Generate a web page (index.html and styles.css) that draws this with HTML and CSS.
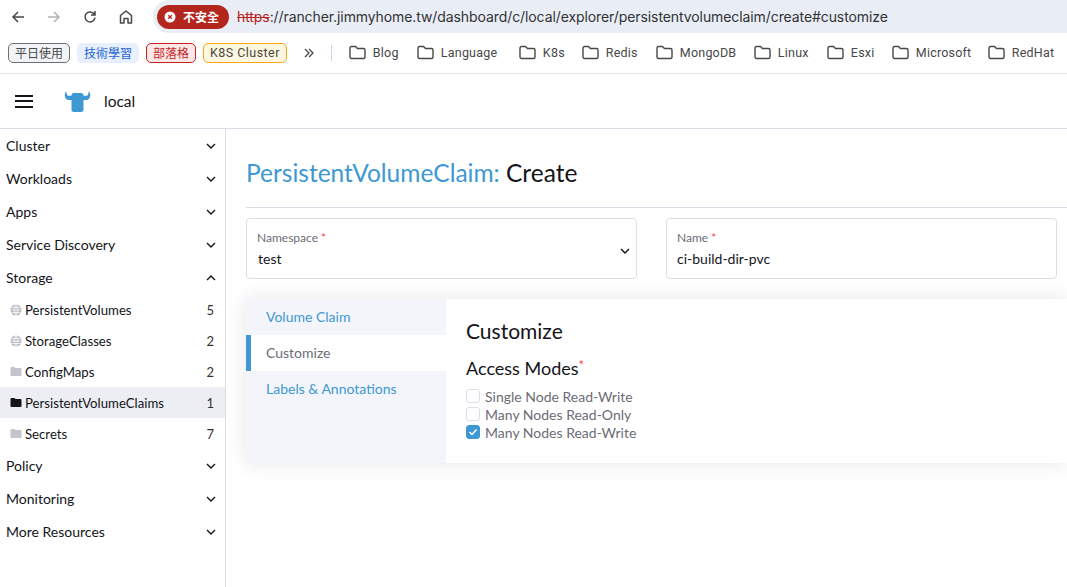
FILE: index.html
```html
<!DOCTYPE html>
<html lang="zh-Hant">
<head>
    <meta charset="UTF-8">
    <title>PersistentVolumeClaim: Create</title>
    <link rel="stylesheet" href="styles.css">
</head>
<body>
    <svg class="sprites" width="0" height="0">
        <symbol id="folder" viewBox="0 0 17 15"><path d="M1 3a1.5 1.5 0 0 1 1.5-1.5h4l2 2h6A1.5 1.5 0 0 1 16 5v7a1.5 1.5 0 0 1-1.5 1.5h-12A1.5 1.5 0 0 1 1 12z" fill="none" stroke="#474747" stroke-width="1.4"/></symbol>
        <symbol id="chev" viewBox="0 0 10 6"><path d="M1 1l4 4 4-4" fill="none" stroke="#141419" stroke-width="1.4"/></symbol>
        <symbol id="globe" viewBox="0 0 12 12"><circle cx="6" cy="6" r="5.5" fill="#b4b4bd"/><path d="M.5 6h11M1.2 3.5h9.600M1.2 8.500h9.600M6 .5v11M6 .5C3 3.500 3 8.500 6 11.500M6 .5c3 3 3 8 0 11" fill="none" stroke="#fff" stroke-width=".7"/></symbol>
        <symbol id="dir" viewBox="0 0 11 9"><path d="M0 1a1 1 0 0 1 1-1h3l1 1h5a1 1 0 0 1 1 1v6a1 1 0 0 1-1 1H1a1 1 0 0 1-1-1z"/></symbol>
    </svg>

    <div class="toolbar">
        <svg class="tool" width="16" height="16" viewBox="0 0 16 16"><path d="M14 8H3M8 3L3 8l5 5" fill="none" stroke="#474747" stroke-width="1.5"/></svg>
        <svg class="tool" width="16" height="16" viewBox="0 0 16 16"><path d="M2 8h11M8 3l5 5-5 5" fill="none" stroke="#b2b2b2" stroke-width="1.5"/></svg>
        <svg class="tool" width="16" height="16" viewBox="0 0 16 16"><path d="M13 8.500A5 5 0 1 1 11.600 4.400L13 6M13 2v4H9" fill="none" stroke="#474747" stroke-width="1.5"/></svg>
        <svg class="tool" width="16" height="16" viewBox="0 0 16 16"><path d="M2.500 14V6.500L8 2l5.500 4.500V14H10V9.500H6V14z" fill="none" stroke="#474747" stroke-width="1.5" stroke-linejoin="round"/></svg>
        <div class="omnibox">
            <span class="not-secure">
                <svg width="12" height="12" viewBox="0 0 12 12"><circle cx="6" cy="6" r="5.500" fill="#fff"/><path d="M4.200 4.200l3.600 3.600M7.800 4.200l-3.600 3.600" stroke="#b3261e" stroke-width="1.300"/></svg>
                不安全
            </span>
            <span class="url"><s>https</s>://rancher.jimmyhome.tw/dashboard/c/local/explorer/persistentvolumeclaim/create#customize</span>
        </div>
    </div>

    <div class="bookmarks">
        <span class="chip chip-grey">平日使用</span>
        <span class="chip chip-blue">技術學習</span>
        <span class="chip chip-red">部落格</span>
        <span class="chip chip-yellow">K8S Cluster</span>
        <svg class="more" width="10" height="10" viewBox="0 0 10 10"><path d="M1 1l4 4-4 4M5 1l4 4-4 4" fill="none" stroke="#474747" stroke-width="1.300"/></svg>
        <span class="sep"></span>
        <span class="bm bm-blog"><svg width="17" height="15"><use href="#folder"/></svg>Blog</span>
        <span class="bm bm-language"><svg width="17" height="15"><use href="#folder"/></svg>Language</span>
        <span class="bm bm-k8s"><svg width="17" height="15"><use href="#folder"/></svg>K8s</span>
        <span class="bm bm-redis"><svg width="17" height="15"><use href="#folder"/></svg>Redis</span>
        <span class="bm bm-mongo"><svg width="17" height="15"><use href="#folder"/></svg>MongoDB</span>
        <span class="bm bm-linux"><svg width="17" height="15"><use href="#folder"/></svg>Linux</span>
        <span class="bm bm-esxi"><svg width="17" height="15"><use href="#folder"/></svg>Esxi</span>
        <span class="bm bm-ms"><svg width="17" height="15"><use href="#folder"/></svg>Microsoft</span>
        <span class="bm"><svg width="17" height="15"><use href="#folder"/></svg>RedHat</span>
    </div>

    <header class="app-header">
        <div class="burger"><i></i><i></i><i></i></div>
        <svg class="logo" width="27" height="22" viewBox="0 0 27 22"><path d="M2 1l.8 3c.3 1.300 1 1.800 2 1.800H8V10H4.800C2 10 .5 7.500 .8 4zM25 1l-.8 3c-.3 1.300-1 1.800-2 1.800H19V10h3.200C25 10 26.500 7.500 26.200 4z" fill="#3d98d3"/><rect x="7.500" y="3" width="12" height="19" rx="2.500" fill="#3d98d3"/></svg>
        <span class="cluster-name">local</span>
    </header>

    <div class="layout">
        <nav class="side">
            <div class="group">Cluster<svg width="10" height="6"><use href="#chev"/></svg></div>
            <div class="group">Workloads<svg width="10" height="6"><use href="#chev"/></svg></div>
            <div class="group">Apps<svg width="10" height="6"><use href="#chev"/></svg></div>
            <div class="group">Service Discovery<svg width="10" height="6"><use href="#chev"/></svg></div>
            <div class="group">Storage<svg class="flip" width="10" height="6"><use href="#chev"/></svg></div>
            <div class="sub"><svg class="ico" width="12" height="12"><use href="#globe"/></svg><span>PersistentVolumes</span><b>5</b></div>
            <div class="sub"><svg class="ico" width="12" height="12"><use href="#globe"/></svg><span>StorageClasses</span><b>2</b></div>
            <div class="sub"><svg class="ico" width="12" height="9"><use href="#dir"/></svg><span>ConfigMaps</span><b>2</b></div>
            <div class="sub sub-active"><svg class="ico" width="12" height="9"><use href="#dir"/></svg><span>PersistentVolumeClaims</span><b>1</b></div>
            <div class="sub"><svg class="ico" width="12" height="9"><use href="#dir"/></svg><span>Secrets</span><b>7</b></div>
            <div class="group">Policy<svg width="10" height="6"><use href="#chev"/></svg></div>
            <div class="group">Monitoring<svg width="10" height="6"><use href="#chev"/></svg></div>
            <div class="group">More Resources<svg width="10" height="6"><use href="#chev"/></svg></div>
        </nav>

        <main class="content">
            <h1 class="title"><span>PersistentVolumeClaim:</span> Create</h1>
            <div class="fields">
                <div class="field">
                    <label>Namespace <em>*</em></label>
                    <div class="value">test</div>
                    <svg class="field-chev" width="10" height="6"><use href="#chev"/></svg>
                </div>
                <div class="field">
                    <label>Name <em>*</em></label>
                    <div class="value value-name">ci-build-dir-pvc</div>
                </div>
            </div>
            <section class="panel">
                <ul class="tabs">
                    <li>Volume Claim</li>
                    <li class="tab-active">Customize</li>
                    <li>Labels &amp; Annotations</li>
                </ul>
                <div class="tab-body">
                    <h2>Customize</h2>
                    <h3>Access Modes<em>*</em></h3>
                    <div class="check"><i class="box"></i>Single Node Read-Write</div>
                    <div class="check"><i class="box"></i>Many Nodes Read-Only</div>
                    <div class="check"><i class="box box-on"><svg width="10" height="8" viewBox="0 0 10 8"><path d="M1.500 4l2.500 2.500 4.500-5" fill="none" stroke="#fff" stroke-width="1.500"/></svg></i>Many Nodes Read-Write</div>
                </div>
            </section>
        </main>
    </div>
</body>
</html>
```

FILE: styles.css
```css
:root {
    --primary: #3d98d3;
    --border: #dcdee7;
    --muted: #6c6c76;
    --body-text: #141419;
}
html, body { height: 100%; }
body { margin: 0; width: 1067px; height: 587px; overflow: hidden; background: #fff; color: var(--body-text); font-family: 'Lato', sans-serif; }
.sprites { position: absolute; }

.toolbar { height: 33px; padding-left: 10px; display: flex; align-items: center; gap: 20px; font-family: 'Inter', sans-serif; }
.tool { flex: none; }
.omnibox { flex: 1; height: 33px; margin-left: -1px; padding-left: 4px; background: #e9edf6; border-radius: 16px 0 0 16px; display: flex; align-items: center; gap: 8px; }
.not-secure { height: 24px; padding: 0 10px 0 7px; background: #b3261e; color: #fff; border-radius: 12px; display: flex; align-items: center; gap: 7px; font-size: 12px; font-weight: 700; font-family: 'Noto Sans CJK TC', sans-serif; }
.url { font-size: 14px; letter-spacing: -.09px; color: #333; white-space: nowrap; }
.url s { color: #b3261e; }

.bookmarks { height: 41px; box-sizing: border-box; padding: 0 0 1px 8px; border-bottom: 1px solid #e2e3e5; display: flex; align-items: center; font-family: 'Roboto', sans-serif; font-size: 12.5px; color: #474747; white-space: nowrap; }
.chip { box-sizing: border-box; height: 20px; padding: 0 6px; margin-right: 7px; border-radius: 5px; border: 1px solid; display: flex; align-items: center; font-family: 'Noto Sans CJK TC', sans-serif; font-size: 12px; }
.chip-grey { border-color: #6b6e73; background: #f1f3f4; color: #474a4f; }
.chip-blue { border-color: #e8f0fd; background: #e8f0fd; color: #1a63d1; }
.chip-red { border-color: #c5221f; background: #fce8e6; color: #c5221f; }
.chip-yellow { border-color: #f3a712; background: #fef7e0; color: #474747; font-family: 'Roboto', sans-serif; font-size: 12.5px; letter-spacing: .45px; }
.more { margin-left: 10px; flex: none; }
.sep { width: 1px; height: 16px; margin: 0 17px; background: #c9d7ee; }
.bm { display: flex; align-items: center; gap: 7px; flex: none; letter-spacing: .2px; }
.bm-blog { width: 68px; }
.bm-language { width: 102px; }
.bm-k8s { width: 63px; }
.bm-redis { width: 74px; }
.bm-mongo { width: 98px; }
.bm-linux { width: 73px; }
.bm-esxi { width: 65px; }
.bm-ms { width: 96px; }

.app-header { height: 55px; box-sizing: border-box; padding-left: 15px; border-bottom: 1px solid var(--border); display: flex; align-items: center; }
.burger { width: 18px; display: flex; flex-direction: column; gap: 3.5px; }
.burger i { display: block; height: 2px; background: #141419; }
.logo { margin-left: 31px; }
.cluster-name { margin-left: 13px; font-size: 15.5px; }

.layout { display: flex; height: 458px; }
.side { width: 226px; box-sizing: border-box; flex: none; border-right: 1px solid var(--border); font-size: 14px; }
.group { height: 33px; padding: 0 9px 0 6px; display: flex; align-items: center; justify-content: space-between; }
.flip { transform: rotate(180deg); }
.sub { height: 31px; padding: 0 11px 0 10px; display: flex; align-items: center; font-size: 13.2px; color: #141419; }
.sub span { flex: 1; margin-left: 3px; }
.sub b { font-weight: 400; font-size: 13px; color: #333; }
.sub .ico { fill: #c4c4cc; flex: none; }
.sub-active { background: #eceef3; }
.sub-active .ico { fill: #141419; }

.content { flex: 1; padding: 0 10px 0 20px; min-width: 0; }
.title { margin: 0 -10px 0 0; height: 79px; box-sizing: border-box; padding-top: 29px; border-bottom: 1px solid var(--border); font-size: 24.5px; font-weight: 400; line-height: 30px; }
.title span { color: var(--primary); }
.fields { display: flex; gap: 29px; margin-top: 10px; }
.field { position: relative; flex: none; width: 391px; height: 61px; box-sizing: border-box; padding: 11px 10px; border: 1px solid var(--border); border-radius: 4px; }
.field label { display: block; font-size: 12px; line-height: 15px; color: var(--muted); }
.field em, .tab-body em { color: #f64747; font-style: normal; }
.value { margin-top: 5px; font-size: 14px; line-height: 18px; padding-left: 1px; }
.value-name { padding-left: 0; }
.field-chev { position: absolute; right: 6px; top: 29px; }

.panel { display: flex; margin: 20px -10px 0 0; height: 164px; box-shadow: 0 0 20px rgba(0, 0, 0, .1); }
.tabs { width: 200px; flex: none; margin: 0; padding: 0; list-style: none; background: #f4f5fa; font-size: 14px; color: var(--primary); }
.tabs li { height: 36px; padding: 0 0 2px 20px; display: flex; align-items: center; box-sizing: border-box; }
.tabs .tab-active { background: #fff; color: var(--muted); border-left: 5px solid var(--primary); padding-left: 15px; }
.tab-body { flex: 1; padding: 19px 20px; background: #fff; }
.tab-body h2 { margin: 0; font-size: 21px; font-weight: 400; line-height: 26px; }
.tab-body h3 { margin: 13px 0 7px; font-size: 18px; font-weight: 400; line-height: 23px; }
.tab-body h3 em { font-size: 13px; vertical-align: 5px; line-height: 0; }
.check { height: 18px; display: flex; align-items: center; gap: 5px; font-size: 14px; color: var(--muted); }
.box { width: 14px; height: 14px; box-sizing: border-box; border: 1px solid var(--border); border-radius: 3px; display: flex; align-items: center; justify-content: center; }
.box-on { background: var(--primary); border-color: var(--primary); }
```
